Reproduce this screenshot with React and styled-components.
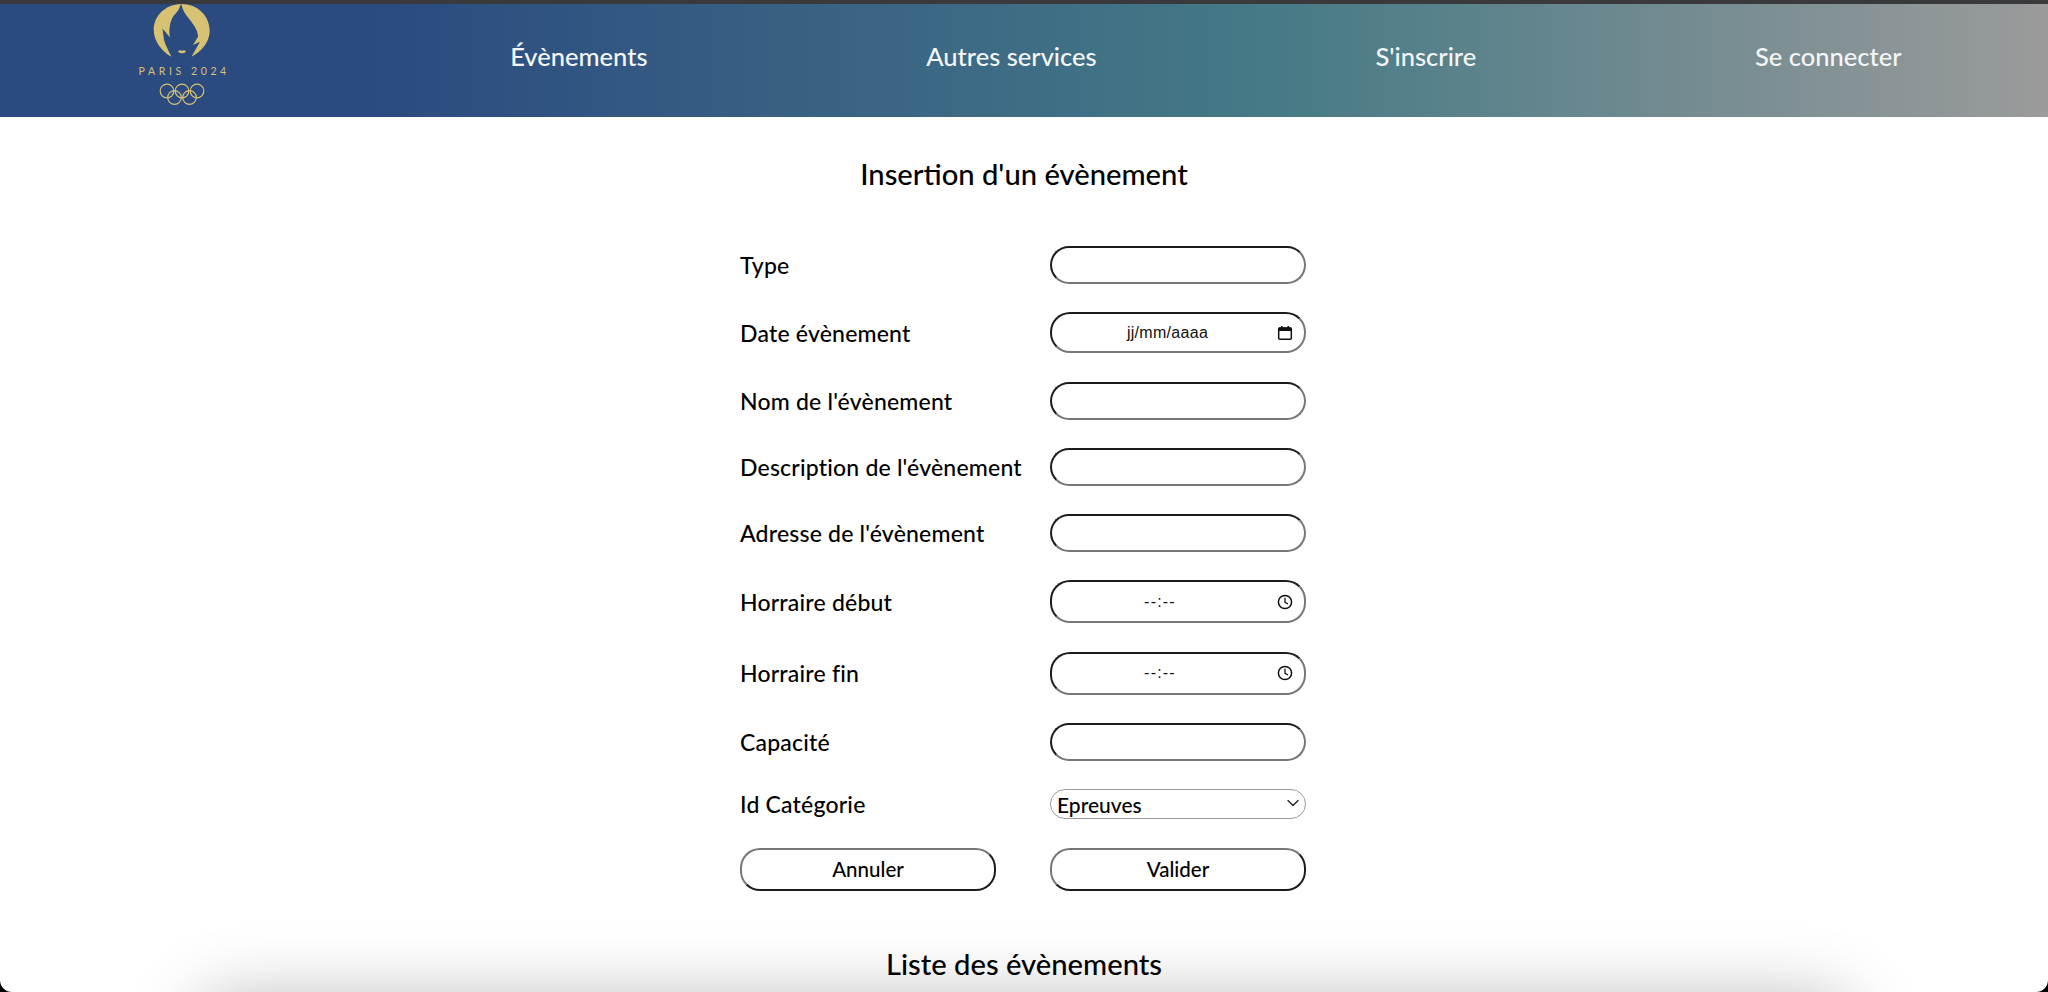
import React from "react";
import styled, { createGlobalStyle } from "styled-components";
import { ChevronDown } from "lucide-react";

const GlobalStyle = createGlobalStyle`
  html, body {
    margin: 0;
    padding: 0;
    background: #000;
    height: 992px;
    overflow: hidden;
  }
  * {
    box-sizing: border-box;
  }
`;

const Page = styled.div`
  height: 992px;
  overflow: hidden;
  background: #fff;
  border-radius: 0 0 12px 12px;
  font-family: "Lato", "Liberation Sans", sans-serif;
  color: #000;
`;

const TopEdge = styled.div`
  height: 4px;
  background: #3a3a3d;
`;

const Header = styled.header`
  height: 113px;
  padding-right: 7px;
  display: flex;
  justify-content: space-around;
  align-items: center;
  background: linear-gradient(
    to right,
    #2b4a80 0%,
    #2b4a80 18%,
    #457a86 62%,
    #9b9b9b 100%
  );
`;

const Logo = styled.div`
  width: 92px;
  height: 113px;
  padding-right: 6px;
  display: flex;
  flex-direction: column;
  align-items: center;
`;

const LogoText = styled.span`
  margin-top: 8px;
  font-family: "Lato", sans-serif;
  font-size: 10.5px;
  line-height: 10px;
  letter-spacing: 3.6px;
  margin-right: -3.6px;
  white-space: nowrap;
  color: #d6c272;
`;

const Rings = styled.svg`
  margin-top: 7px;
`;

const NavLink = styled.a`
  color: #f4f6f8;
  font-size: 25.5px;
  font-weight: 500;
  line-height: 30px;
  margin-bottom: 10px;
  white-space: nowrap;
`;

const Title = styled.h2`
  margin: ${(p) => p.$top || 0}px 0 0;
  text-align: center;
  font-size: 29.2px;
  font-weight: 500;
  line-height: 36px;
`;

const Form = styled.form`
  width: 568px;
  margin: 54px auto 0;
  display: grid;
  grid-template-columns: 310px 256px;
  row-gap: 28.3px;
  align-items: center;
`;

const Label = styled.label`
  font-size: 23px;
  font-weight: 500;
  line-height: 28px;
  letter-spacing: 0.2px;
  white-space: nowrap;
`;

const Field = styled.div`
  position: relative;
  height: ${(p) => p.$h || 38}px;
`;

const Input = styled.input`
  width: 100%;
  height: 100%;
  padding: 0 ${(p) => 12 + (p.$shift || 0)}px 0 12px;
  background: #fff;
  border-width: 2px;
  border-style: solid;
  border-color: #1c1c1c #777 #777 #1c1c1c;
  border-radius: 20px;
  outline: none;
  text-align: center;
  font-family: "Liberation Sans", sans-serif;
  font-size: 16px;
  letter-spacing: ${(p) => p.$spacing || 0}px;
  &::placeholder {
    color: #111;
    opacity: 1;
  }
`;

const PickerIcon = styled.svg`
  position: absolute;
  right: 13px;
  top: 50%;
  transform: translateY(-50%);
`;

const SelectBox = styled.select`
  appearance: none;
  width: 100%;
  height: 100%;
  padding: 0 6px;
  background: #fff;
  border: 1px solid #9a9a9a;
  border-radius: 15px;
  outline: none;
  color: #000;
  font-family: "Lato", sans-serif;
  font-size: 21px;
  font-weight: 500;
`;

const SelectArrow = styled(ChevronDown)`
  position: absolute;
  right: 3px;
  top: 4px;
  pointer-events: none;
`;

const Buttons = styled.div`
  grid-column: 1 / -1;
  display: grid;
  grid-template-columns: 256px 256px;
  column-gap: 54px;
`;

const Button = styled.button`
  height: 43px;
  background: #fff;
  border-width: 2px;
  border-style: solid;
  border-color: #777 #1c1c1c #1c1c1c #777;
  border-radius: 20px;
  color: #000;
  font-family: "Lato", sans-serif;
  font-size: 20.5px;
  font-weight: 500;
`;

const EventsTable = styled.div`
  width: 1640px;
  height: 300px;
  margin: 23px auto 0;
  background: #fff;
  box-shadow: 0 0 70px rgba(0, 0, 0, 0.33);
`;

function CalendarIcon() {
  return (
    <PickerIcon width="16" height="16" viewBox="0 0 16 16">
      <rect x="1.7" y="3" width="12.6" height="11.3" rx="1" fill="none" stroke="#111" strokeWidth="1.5" />
      <rect x="1.7" y="2.5" width="12.6" height="3.5" fill="#111" />
      <rect x="4" y="1" width="1.5" height="2" fill="#111" />
      <rect x="10.5" y="1" width="1.5" height="2" fill="#111" />
    </PickerIcon>
  );
}

function ClockIcon() {
  return (
    <PickerIcon width="16" height="16" viewBox="0 0 16 16">
      <circle cx="8" cy="8" r="6.6" fill="none" stroke="#111" strokeWidth="1.5" />
      <path d="M8 3.8V8.3L11 10" fill="none" stroke="#111" strokeWidth="1.3" />
    </PickerIcon>
  );
}

function Flame() {
  return (
    <svg width="58" height="54" viewBox="0 0 58 54">
      <path
        fill="#d6c272"
        d="M28.3 0C12 0.3 0.7 12 0.7 26C0.7 37 9 48 18.5 52.7C15.5 47 12.5 41 11 36L9.5 24.5L17 33.5C15.5 26 17 17 20.5 12C24 8 26.5 5 26.7 2.7Z"
      />
      <path
        fill="#d6c272"
        d="M28.3 0C45 0 56.7 12 56.7 27C56.7 38 48 48 38.5 52.7L47 37.7L40 41L45 32.7C45 26 40 20 35.5 14C32 10 29.5 6 28.3 0Z"
      />
      <path fill="#d6c272" d="M25 47.3C26.3 46 28 46 29 47C30 46 31.7 46 33 47.3C31.5 50 26.5 50 25 47.3Z" />
    </svg>
  );
}

function OlympicRings() {
  const rings = [
    [8, 8],
    [23, 8],
    [38, 8],
    [15.5, 14.5],
    [30.5, 14.5],
  ];
  return (
    <Rings width="46" height="22" viewBox="0 0 46 22">
      {rings.map(([cx, cy]) => (
        <circle key={cx} cx={cx} cy={cy} r="6.8" fill="none" stroke="#d6c272" strokeWidth="1.2" />
      ))}
    </Rings>
  );
}

const rows = [
  { label: "Type", h: 38 },
  { label: "Date évènement", h: 41, placeholder: "jj/mm/aaaa", icon: <CalendarIcon />, shift: 21, spacing: 0.3 },
  { label: "Nom de l'évènement", h: 38 },
  { label: "Description de l'évènement", h: 38 },
  { label: "Adresse de l'évènement", h: 38 },
  { label: "Horraire début", h: 43, placeholder: "--:--", icon: <ClockIcon />, shift: 36, spacing: 1.2 },
  { label: "Horraire fin", h: 43, placeholder: "--:--", icon: <ClockIcon />, shift: 36, spacing: 1.2 },
  { label: "Capacité", h: 38 },
];

function App() {
  return (
    <Page>
      <GlobalStyle />
      <TopEdge />
      <Header>
        <Logo>
          <Flame />
          <LogoText>PARIS 2024</LogoText>
          <OlympicRings />
        </Logo>
        <NavLink>Évènements</NavLink>
        <NavLink>Autres services</NavLink>
        <NavLink>S'inscrire</NavLink>
        <NavLink>Se connecter</NavLink>
      </Header>
      <Title $top={39}>Insertion d'un évènement</Title>
      <Form>
        {rows.map((row) => (
          <React.Fragment key={row.label}>
            <Label>{row.label}</Label>
            <Field $h={row.h}>
              <Input type="text" placeholder={row.placeholder} $shift={row.shift} $spacing={row.spacing} />
              {row.icon}
            </Field>
          </React.Fragment>
        ))}
        <Label>Id Catégorie</Label>
        <Field $h={30}>
          <SelectBox defaultValue="Epreuves">
            <option>Epreuves</option>
          </SelectBox>
          <SelectArrow size={20} strokeWidth={1.6} color="#222" />
        </Field>
        <Buttons>
          <Button type="button">Annuler</Button>
          <Button type="button">Valider</Button>
        </Buttons>
      </Form>
      <Title $top={55}>Liste des évènements</Title>
      <EventsTable />
    </Page>
  );
}

export default App;
